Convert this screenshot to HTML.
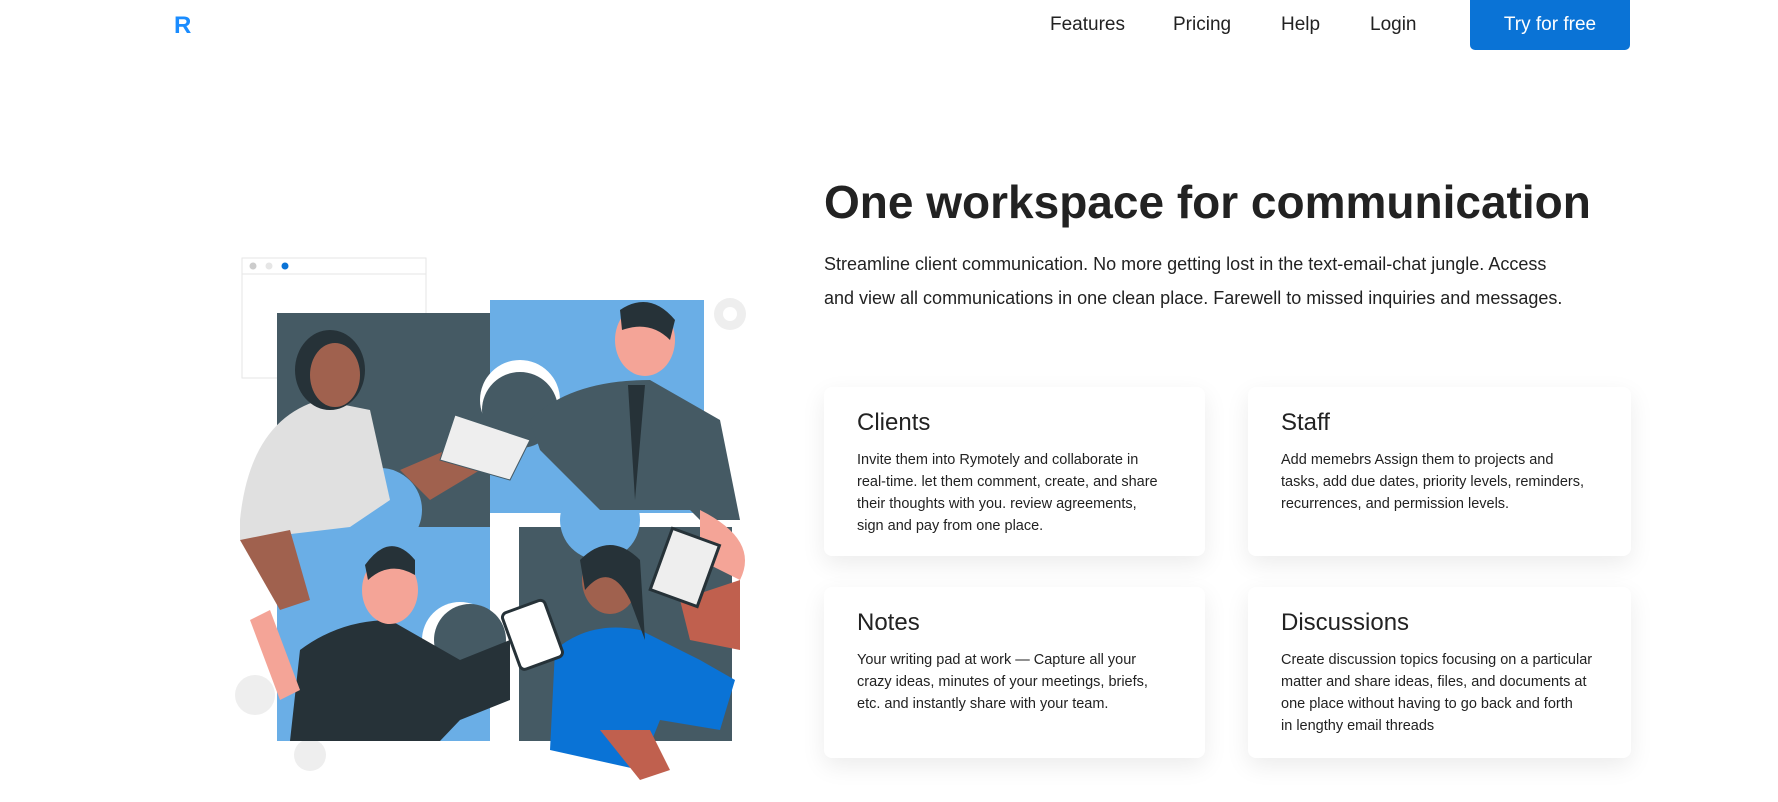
<!DOCTYPE html>
<html><head><meta charset="utf-8"><style>
*{margin:0;padding:0;box-sizing:border-box}
body{width:1778px;height:802px;background:#fff;font-family:"Liberation Sans",sans-serif;color:#222;position:relative;overflow:hidden}
.a{position:absolute}
.nav{top:14px;font-size:19px;color:#222}
.btn{left:1470px;top:0;width:160px;height:50px;background:#0a73d6;border-radius:0 0 5px 5px;color:#fff;font-size:19px;text-align:center;line-height:50px}
h1{position:absolute;left:824px;top:175px;font-size:46px;font-weight:bold;color:#222;letter-spacing:0}
.p{left:824px;top:247px;font-size:18px;line-height:34px;color:#222;white-space:nowrap}
.card{position:absolute;background:#fff;border-radius:8px;box-shadow:0 8px 24px rgba(0,0,0,.08);padding:22px 33px}
.card h3{font-size:24px;font-weight:normal;margin-bottom:12px}
.card p{font-size:14.5px;line-height:22px;color:#222;white-space:nowrap}
</style></head><body>
<div class="a" style="left:174px;top:12px;font-size:24px;font-weight:bold;color:#1a8cff">R</div>
<div class="a nav" style="left:1050px">Features</div>
<div class="a nav" style="left:1173px">Pricing</div>
<div class="a nav" style="left:1281px">Help</div>
<div class="a nav" style="left:1370px">Login</div>
<div class="a btn">Try for free</div>
<h1>One workspace for communication</h1>
<div class="a p">Streamline client communication. No more getting lost in the text-email-chat jungle. Access<br>and view all communications in one clean place. Farewell to missed inquiries and messages.</div>
<div class="card" style="left:824px;top:387px;width:381px;height:169px"><h3>Clients</h3><p>Invite them into Rymotely and collaborate in<br>real-time. let them comment, create, and share<br>their thoughts with you. review agreements,<br>sign and pay from one place.</p></div>
<div class="card" style="left:1248px;top:387px;width:383px;height:169px"><h3>Staff</h3><p>Add memebrs Assign them to projects and<br>tasks, add due dates, priority levels, reminders,<br>recurrences, and permission levels.</p></div>
<div class="card" style="left:824px;top:587px;width:381px;height:171px"><h3>Notes</h3><p>Your writing pad at work — Capture all your<br>crazy ideas, minutes of your meetings, briefs,<br>etc. and instantly share with your team.</p></div>
<div class="card" style="left:1248px;top:587px;width:383px;height:171px"><h3>Discussions</h3><p>Create discussion topics focusing on a particular<br>matter and share ideas, files, and documents at<br>one place without having to go back and forth<br>in lengthy email threads</p></div>
<svg class="a" style="left:0;top:0" width="1778" height="802">
<rect x="242" y="258" width="184" height="120" fill="#fff" stroke="#e6e6e6"/>
<line x1="242" y1="274" x2="426" y2="274" stroke="#e6e6e6"/>
<circle cx="253" cy="266" r="3.5" fill="#ccc"/><circle cx="269" cy="266" r="3.5" fill="#e6e6e6"/><circle cx="285" cy="266" r="3.5" fill="#0a73d6"/>
<circle cx="730" cy="314" r="16" fill="#eee"/><circle cx="730" cy="314" r="7" fill="#fff"/>
<circle cx="255" cy="695" r="20" fill="#eee"/><circle cx="310" cy="755" r="16" fill="#eee"/>
<rect x="277" y="313" width="213" height="214" fill="#455a64"/>
<rect x="490" y="300" width="214" height="213" fill="#6aaee6"/>
<rect x="277" y="527" width="213" height="214" fill="#6aaee6"/>
<rect x="519" y="527" width="213" height="214" fill="#455a64"/>
<circle cx="520" cy="400" r="40" fill="#fff"/><circle cx="520" cy="410" r="38" fill="#455a64"/>
<circle cx="380" cy="510" r="42" fill="#6aaee6"/>
<circle cx="460" cy="640" r="38" fill="#fff"/><circle cx="470" cy="640" r="36" fill="#455a64"/>
<circle cx="600" cy="520" r="40" fill="#6aaee6"/>
<path d="M240 520 Q250 420 320 400 L370 410 L390 500 L350 527 L240 540 Z" fill="#e0e0e0"/>
<ellipse cx="330" cy="370" rx="35" ry="40" fill="#263238"/><ellipse cx="335" cy="375" rx="25" ry="32" fill="#a0614e"/>
<path d="M240 540 L280 610 L310 600 L290 530 Z" fill="#a0614e"/>
<path d="M400 470 L470 440 L480 470 L430 500 Z" fill="#a0614e"/>
<path d="M455 415 L530 440 L510 480 L440 460 Z" fill="#eee" stroke="#455a64"/>
<path d="M530 420 Q570 380 650 380 L720 420 L740 520 L700 520 L690 510 L600 510 L540 450 Z" fill="#455a64"/>
<path d="M628 385 L635 500 L645 385 Z" fill="#263238"/>
<ellipse cx="645" cy="340" rx="30" ry="36" fill="#f4a497"/><path d="M620 310 Q650 290 675 320 L670 340 Q650 320 622 330 Z" fill="#263238"/>
<path d="M700 510 Q760 540 740 580 L700 560 Z" fill="#f4a497"/>
<path d="M290 741 L300 650 Q340 620 390 620 L460 660 L510 640 L510 700 L460 720 L440 741 Z" fill="#263238"/>
<ellipse cx="390" cy="590" rx="28" ry="34" fill="#f4a497"/><path d="M365 565 Q390 530 415 560 L415 575 Q390 560 368 580 Z" fill="#263238"/>
<path d="M250 620 L280 700 L300 690 L270 610 Z" fill="#f4a497"/>
<path d="M550 750 L555 650 Q590 620 640 630 L700 660 L735 680 L720 730 L660 720 L640 770 Z" fill="#0a73d6"/>
<ellipse cx="610" cy="580" rx="28" ry="34" fill="#a0614e"/><path d="M580 560 Q610 530 640 560 L645 640 L630 600 Q610 560 585 590 Z" fill="#263238"/>
<path d="M680 600 L740 580 L740 650 L690 640 Z" fill="#c0604e"/>
<path d="M600 730 L650 730 L670 770 L640 780 Z" fill="#c0604e"/>
<rect x="510" y="605" width="45" height="60" rx="5" fill="#fff" stroke="#263238" stroke-width="3" transform="rotate(-20 532 635)"/>
<rect x="660" y="535" width="50" height="65" fill="#eee" stroke="#263238" stroke-width="3" transform="rotate(20 685 567)"/>
</svg>
</body></html>
